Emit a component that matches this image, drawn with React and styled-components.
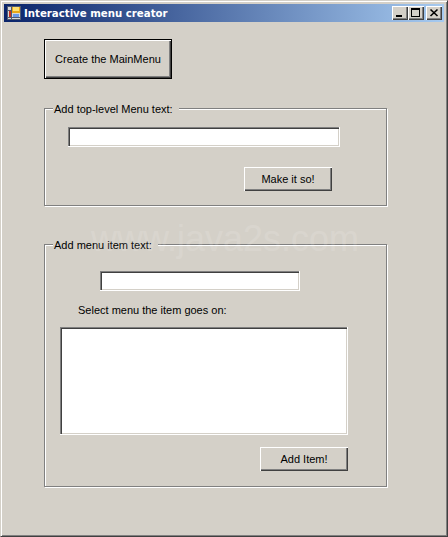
import React from 'react';
import styled, { createGlobalStyle } from 'styled-components';

const Global = createGlobalStyle`
  html, body { margin: 0; padding: 0; background: #d4d0c8; }
  * { box-sizing: border-box; }
  #root { width: 448px; height: 537px; }
`;

const Window = styled.div`
  position: relative;
  width: 448px;
  height: 537px;
  overflow: hidden;
  display: flex;
  flex-direction: column;
  padding: 4px;
  background: #d4d0c8;
  font-family: "Liberation Sans", Arial, sans-serif;
  font-size: 11px;
  color: #000;
  border: 1px solid;
  border-color: #d4d0c8 #404040 #404040 #d4d0c8;
  box-shadow: inset 1px 1px 0 #fff, inset -1px -1px 0 #808080;
`;

const TitleBar = styled.div`
  flex: none;
  height: 18px;
  margin: -1px -1px 0;
  display: flex;
  align-items: center;
  padding: 0 2px 0 3px;
  background: linear-gradient(90deg, #0a246a, #a6caf0);
`;

const TitleText = styled.span`
  margin-left: 3px;
  flex: 1;
  font: bold 10.2px "DejaVu Sans", "Liberation Sans", sans-serif;
  color: #fff;
  white-space: nowrap;
`;

const CaptionButton = styled.div`
  width: 16px;
  height: 14px;
  margin-left: ${(p) => p.$gap || 0}px;
  display: flex;
  align-items: center;
  justify-content: center;
  background: #d4d0c8;
  box-shadow: inset 1px 1px 0 #fff, inset -1px -1px 0 #404040, inset -2px -2px 0 #808080;
`;

const Content = styled.div`
  flex: 1;
  display: flex;
  flex-direction: column;
  align-items: flex-start;
  padding: 17px 0 0 39px;
`;

const Button = styled.button`
  display: block;
  width: ${(p) => p.$w}px;
  height: ${(p) => p.$h}px;
  margin: 0;
  padding: 0;
  font: inherit;
  color: #000;
  background: #d4d0c8;
  border: ${(p) => (p.$default ? '1px solid #000' : '0')};
  box-shadow: inset 1px 1px 0 #fff, inset -1px -1px 0 #404040, inset -2px -2px 0 #808080;
`;

const Group = styled.fieldset`
  position: relative;
  width: 343px;
  height: ${(p) => p.$h}px;
  margin: ${(p) => p.$mt}px 0 0;
  padding: 0;
  border: 1px solid #808080;
  box-shadow: 1px 1px 0 #fff, inset 1px 1px 0 #fff;
  display: flex;
  flex-direction: column;
  align-items: flex-start;
`;

const GroupLabel = styled.div`
  position: absolute;
  left: 8px;
  top: -6px;
  padding: 0 6px 0 1px;
  height: 12px;
  line-height: 12px;
  background: #d4d0c8;
  white-space: nowrap;
`;

const Field = styled.input`
  display: block;
  width: ${(p) => p.$w}px;
  height: 20px;
  margin: ${(p) => p.$mt}px 0 0 ${(p) => p.$ml}px;
  padding: 0;
  background: #fff;
  border: 0;
  outline: 0;
  box-shadow: inset 1px 1px 0 #808080, inset 2px 2px 0 #404040, inset -1px -1px 0 #d4d0c8;
  border-right: 1px solid #fff;
  border-bottom: 1px solid #fff;
`;

const ListBox = styled.div`
  width: 288px;
  height: 108px;
  margin: 10px 0 0 15px;
  background: #fff;
  border-right: 1px solid #fff;
  border-bottom: 1px solid #fff;
  box-shadow: inset 1px 1px 0 #808080, inset 2px 2px 0 #404040, inset -1px -1px 0 #d4d0c8;
`;

const Caption = styled.div`
  margin: ${(p) => p.$mt}px 0 0 ${(p) => p.$ml}px;
  line-height: 14px;
`;

const RightButton = styled.div`
  margin: ${(p) => p.$mt}px 0 0 ${(p) => p.$ml}px;
`;

const Watermark = styled.div`
  position: absolute;
  left: 90px;
  top: 217px;
  font: 36px "Liberation Sans", sans-serif;
  color: #fff;
  opacity: 0.12;
  white-space: nowrap;
  pointer-events: none;
`;

const AppIcon = () => (
  <svg width="14" height="14" viewBox="0 0 14 14" shapeRendering="crispEdges">
    <rect x="0" y="0" width="14" height="14" fill="#d8d8d8" />
    <rect x="0.5" y="0.5" width="13" height="13" fill="none" stroke="#505a70" />
    <rect x="1" y="4" width="4" height="1" fill="#505a70" />
    <rect x="1" y="11" width="12" height="1" fill="#505a70" />
    <rect x="4" y="1" width="1" height="12" fill="#505a70" />
    <rect x="2" y="5" width="2" height="6" fill="#c83020" />
    <rect x="5" y="1" width="8" height="6" fill="#e8a818" />
    <rect x="6" y="1" width="6" height="4" fill="#ffe070" />
    <rect x="6" y="8" width="6" height="3" fill="#6a9ae8" />
  </svg>
);

export default function App() {
  return (
    <Window>
      <Global />
      <TitleBar>
        <AppIcon />
        <TitleText>Interactive menu creator</TitleText>
        <CaptionButton>
          <svg width="10" height="10" viewBox="0 0 10 10" shapeRendering="crispEdges"><rect x="1" y="7" width="6" height="2" fill="#000" /></svg>
        </CaptionButton>
        <CaptionButton>
          <svg width="10" height="10" viewBox="0 0 10 10" shapeRendering="crispEdges"><path d="M0 0h9v9H0zM1 2v6h7V2z" fill="#000" fillRule="evenodd" /></svg>
        </CaptionButton>
        <CaptionButton $gap={2}>
          <svg width="10" height="10" viewBox="0 0 10 10"><path d="M1.5 1.5 8.5 8M8.5 1.5 1.5 8" stroke="#000" strokeWidth="1.6" /></svg>
        </CaptionButton>
      </TitleBar>
      <Content>
        <Button $w={128} $h={40} $default>Create the MainMenu</Button>
        <Group $h={98} $mt={29}>
          <GroupLabel>Add top-level Menu text:</GroupLabel>
          <Field $w={272} $mt={18} $ml={23} />
          <RightButton $mt={20} $ml={199}>
            <Button $w={88} $h={24}>Make it so!</Button>
          </RightButton>
        </Group>
        <Group $h={243} $mt={38}>
          <GroupLabel>Add menu item text:</GroupLabel>
          <Field $w={200} $mt={26} $ml={55} />
          <Caption $mt={12} $ml={33}>Select menu the item goes on:</Caption>
          <ListBox />
          <RightButton $mt={12} $ml={215}>
            <Button $w={88} $h={24}>Add Item!</Button>
          </RightButton>
        </Group>
      </Content>
      <Watermark>www.java2s.com</Watermark>
    </Window>
  );
}
